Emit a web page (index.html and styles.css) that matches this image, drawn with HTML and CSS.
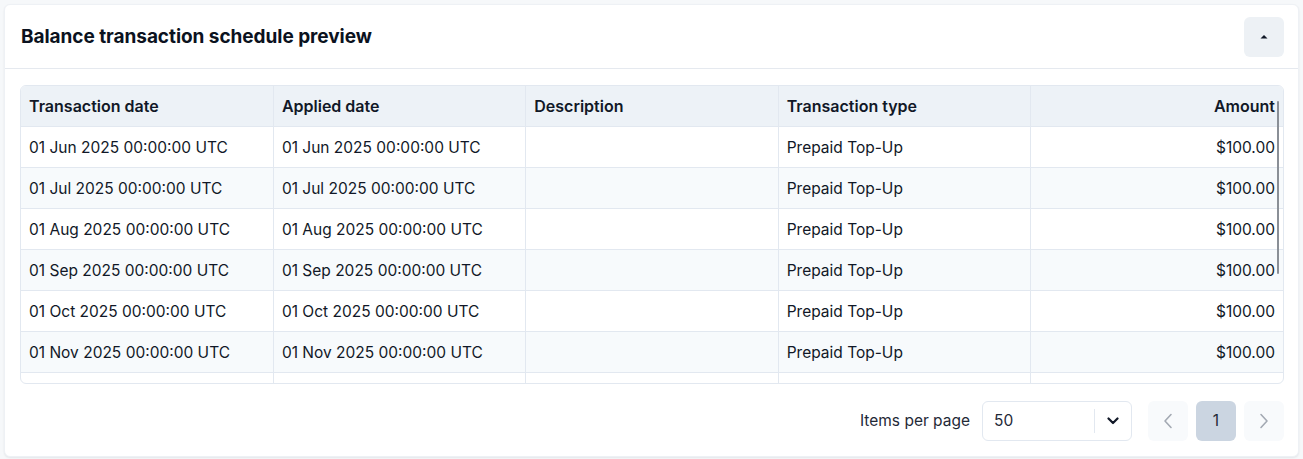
FILE: index.html
```html
<!DOCTYPE html>
<html>
<head>
<meta charset="utf-8">
<link rel="stylesheet" href="styles.css">
</head>
<body>
<div class="card">
  <div class="card-header">
    <h2 class="title">Balance transaction schedule preview</h2>
    <button class="collapse-btn" aria-label="Collapse">
      <svg width="8" height="5" viewBox="0 0 8 5"><path d="M0.5 4.5 L4 1 L7.5 4.5 Z" fill="#111827"/></svg>
    </button>
  </div>
  <div class="card-body">
    <div class="table-wrap">
      <div class="table-scroll">
        <table class="grid">
          <thead>
            <tr><th>Transaction date</th><th>Applied date</th><th>Description</th><th>Transaction type</th><th class="num">Amount</th></tr>
          </thead>
          <tbody>
            <tr><td>01 Jun 2025 00:00:00 UTC</td><td>01 Jun 2025 00:00:00 UTC</td><td></td><td>Prepaid Top-Up</td><td class="num">$100.00</td></tr>
            <tr><td>01 Jul 2025 00:00:00 UTC</td><td>01 Jul 2025 00:00:00 UTC</td><td></td><td>Prepaid Top-Up</td><td class="num">$100.00</td></tr>
            <tr><td>01 Aug 2025 00:00:00 UTC</td><td>01 Aug 2025 00:00:00 UTC</td><td></td><td>Prepaid Top-Up</td><td class="num">$100.00</td></tr>
            <tr><td>01 Sep 2025 00:00:00 UTC</td><td>01 Sep 2025 00:00:00 UTC</td><td></td><td>Prepaid Top-Up</td><td class="num">$100.00</td></tr>
            <tr><td>01 Oct 2025 00:00:00 UTC</td><td>01 Oct 2025 00:00:00 UTC</td><td></td><td>Prepaid Top-Up</td><td class="num">$100.00</td></tr>
            <tr><td>01 Nov 2025 00:00:00 UTC</td><td>01 Nov 2025 00:00:00 UTC</td><td></td><td>Prepaid Top-Up</td><td class="num">$100.00</td></tr>
            <tr><td>01 Dec 2025 00:00:00 UTC</td><td>01 Dec 2025 00:00:00 UTC</td><td></td><td>Prepaid Top-Up</td><td class="num">$100.00</td></tr>
            <tr><td>01 Jan 2026 00:00:00 UTC</td><td>01 Jan 2026 00:00:00 UTC</td><td></td><td>Prepaid Top-Up</td><td class="num">$100.00</td></tr>
            <tr><td>01 Feb 2026 00:00:00 UTC</td><td>01 Feb 2026 00:00:00 UTC</td><td></td><td>Prepaid Top-Up</td><td class="num">$100.00</td></tr>
            <tr><td>01 Mar 2026 00:00:00 UTC</td><td>01 Mar 2026 00:00:00 UTC</td><td></td><td>Prepaid Top-Up</td><td class="num">$100.00</td></tr>
            <tr><td>01 Apr 2026 00:00:00 UTC</td><td>01 Apr 2026 00:00:00 UTC</td><td></td><td>Prepaid Top-Up</td><td class="num">$100.00</td></tr>
            <tr><td>01 May 2026 00:00:00 UTC</td><td>01 May 2026 00:00:00 UTC</td><td></td><td>Prepaid Top-Up</td><td class="num">$100.00</td></tr>
          </tbody>
        </table>
      </div>
      <div class="scroll-thumb"></div>
    </div>
    <div class="pager">
      <span class="pager-label">Items per page</span>
      <div class="select">
        <span class="select-value">50</span>
        <span class="select-arrow">
          <svg width="12" height="8" viewBox="0 0 12 8"><path d="M1.5 1.5 L6 6 L10.5 1.5" fill="none" stroke="#111827" stroke-width="2.2" stroke-linecap="round" stroke-linejoin="round"/></svg>
        </span>
      </div>
      <div class="pages">
        <button class="page-btn nav" aria-label="Previous">
          <svg width="10" height="16" viewBox="0 0 10 16"><path d="M8 1.5 L2 8 L8 14.5" fill="none" stroke="#a3a9b3" stroke-width="1.6" stroke-linecap="round" stroke-linejoin="round"/></svg>
        </button>
        <button class="page-btn current">1</button>
        <button class="page-btn nav" aria-label="Next">
          <svg width="10" height="16" viewBox="0 0 10 16"><path d="M2 1.5 L8 8 L2 14.5" fill="none" stroke="#a3a9b3" stroke-width="1.6" stroke-linecap="round" stroke-linejoin="round"/></svg>
        </button>
      </div>
    </div>
  </div>
</div>
</body>
</html>
```
FILE: styles.css
```css
* { box-sizing: border-box; }
html, body { margin: 0; padding: 0; }
body {
  background: #f6f8fa;
  font-family: "Inter", "Noto Sans", sans-serif;
  color: #111827;
  padding: 4px 4px 2px 4px;
}
.card {
  background: #ffffff;
  border: 1px solid #eef1f5;
  border-radius: 6px;
  box-shadow: 0 1px 2px rgba(16, 24, 40, 0.08);
  height: 453px;
}
.card-header {
  display: flex;
  align-items: center;
  justify-content: space-between;
  height: 64px;
  padding: 0 14px 0 16px;
  border-bottom: 1px solid #e5e9ef;
}
.title {
  margin: 0;
  font-size: 19px;
  font-weight: 700;
  color: #0b1220;
  letter-spacing: -0.05px;
}
.collapse-btn {
  width: 40px;
  height: 40px;
  border: none;
  border-radius: 6px;
  background: #edf1f5;
  display: flex;
  align-items: center;
  justify-content: center;
  padding: 0;
}
.card-body {
  padding: 16px 14px 0 15px;
}
.table-wrap {
  position: relative;
  border: 1px solid #e2e8f0;
  border-radius: 6px;
  overflow: hidden;
}
.table-scroll {
  height: 297px;
  overflow-y: auto;
  scrollbar-width: none;
}
.table-scroll::-webkit-scrollbar { display: none; }
.grid {
  width: 100%;
  border-collapse: collapse;
  table-layout: fixed;
}
.grid th, .grid td {
  text-align: left;
  padding: 1px 8px 0 8px;
  white-space: nowrap;
  border-right: 1px solid #e2e8f0;
  border-bottom: 1px solid #e2e8f0;
}
.grid th:last-child, .grid td:last-child { border-right: none; }
.grid th {
  height: 40px;
  background: #edf2f7;
  font-size: 16px;
  font-weight: 600;
  color: #111827;
}
.grid td {
  height: 41px;
  font-size: 15.5px;
  font-weight: 400;
  color: #111827;
}
.grid tbody tr:nth-child(even) td { background: #f7fafc; }
.grid .num { text-align: right; }
.scroll-thumb {
  position: absolute;
  right: 4px;
  top: 15px;
  width: 2px;
  height: 173px;
  background: #8a8f96;
  border-radius: 1px;
}
.pager {
  display: flex;
  align-items: center;
  justify-content: flex-end;
  margin-top: 17px;
}
.pager-label {
  font-size: 15.5px;
  line-height: 20px;
  color: #1f2937;
  margin-right: 12px;
}
.select {
  display: flex;
  align-items: center;
  width: 150px;
  height: 40px;
  border: 1px solid #e2e8f0;
  border-radius: 6px;
}
.select-value {
  flex: 1;
  font-size: 15.5px;
  line-height: 20px;
  padding-left: 11px;
  color: #1f2937;
}
.select-arrow {
  width: 37px;
  height: 24px;
  border-left: 1px solid #e2e8f0;
  display: flex;
  align-items: center;
  justify-content: center;
}
.pages {
  display: flex;
  gap: 8px;
  margin-left: 16px;
}
.page-btn {
  width: 40px;
  height: 40px;
  border: none;
  border-radius: 6px;
  background: #f8fafc;
  display: flex;
  align-items: center;
  justify-content: center;
  padding: 0;
  font-family: inherit;
  font-size: 15.5px;
  line-height: 20px;
  color: #1f2937;
}
.page-btn.current { background: #cbd5e1; }
```
